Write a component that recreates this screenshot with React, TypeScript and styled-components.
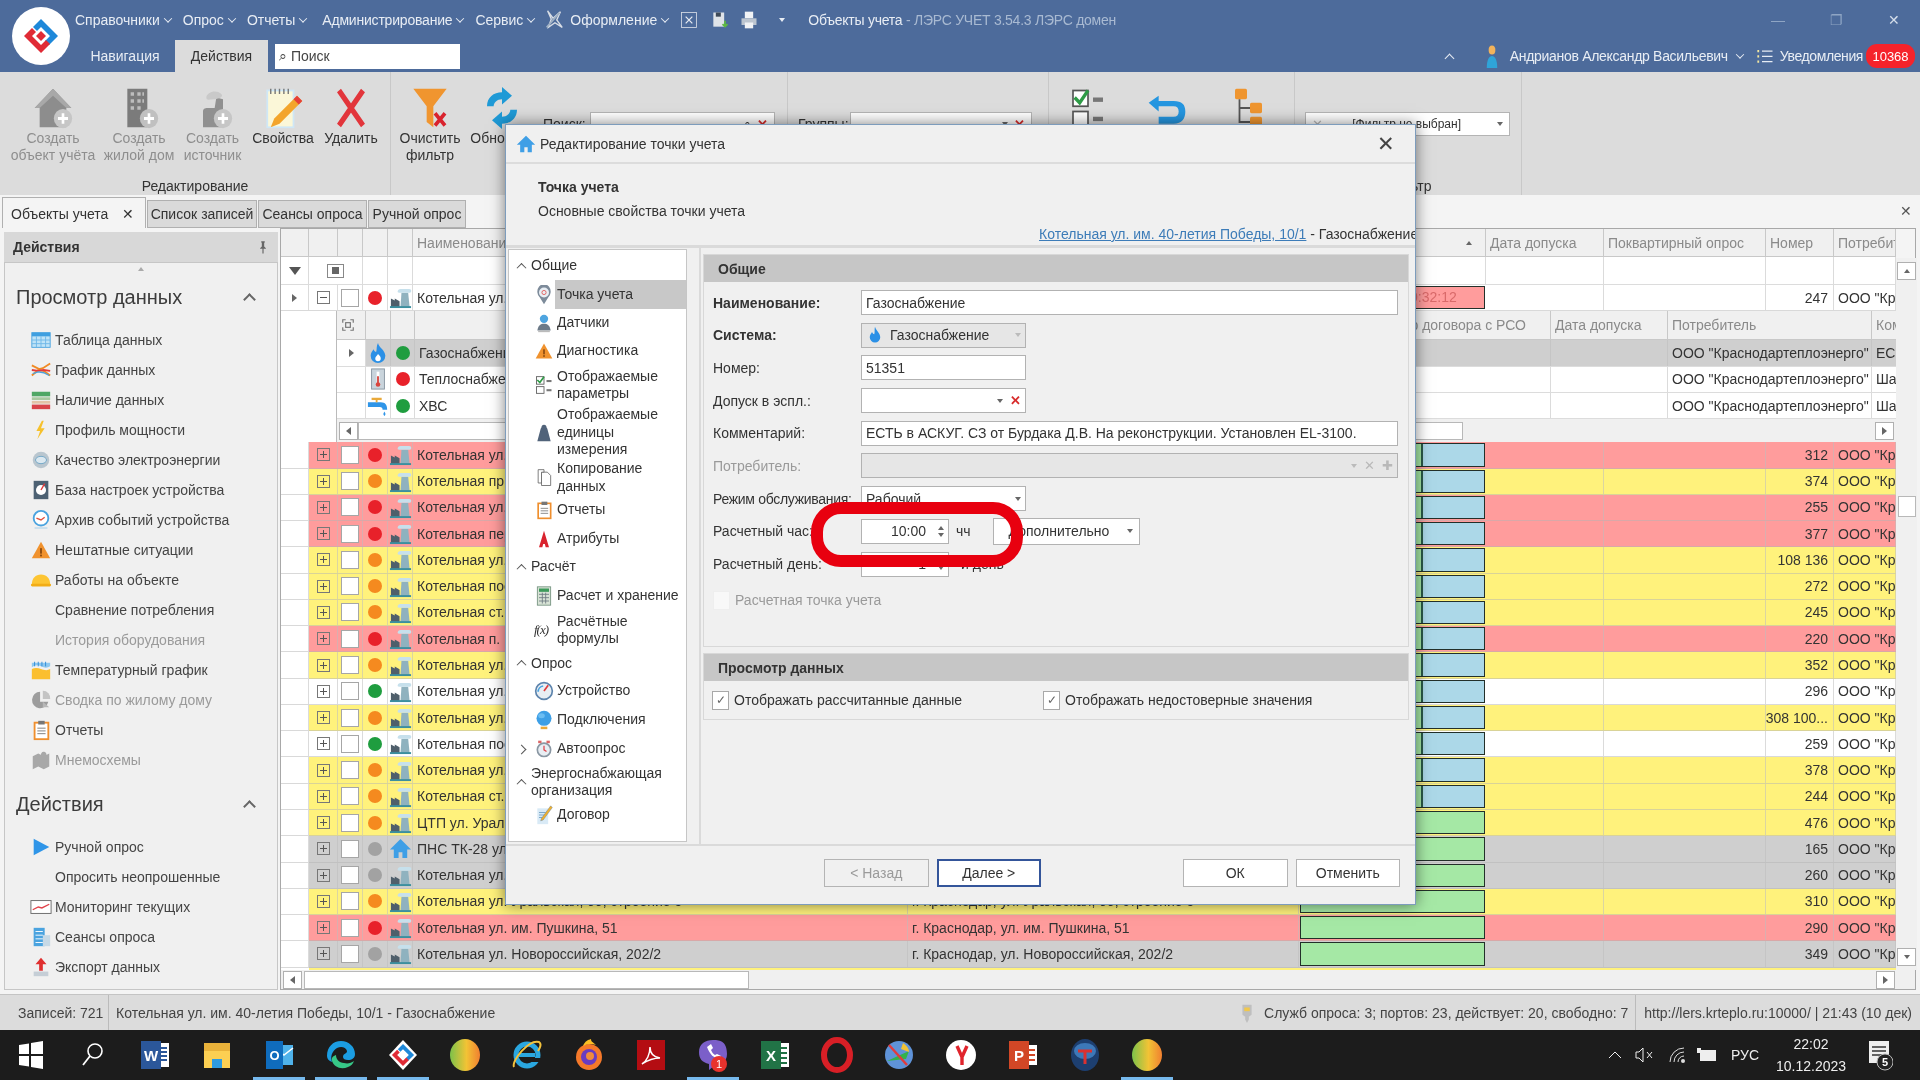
import React from "react";
import styled, { createGlobalStyle } from "styled-components";

const Global = createGlobalStyle`
  html, body { margin: 0; padding: 0; background: #1c1c1c; }
  body { font-family: "Liberation Sans", Arial, sans-serif; }
  * { box-sizing: border-box; }
`;

const paths: Record<string, React.ReactNode> = {
  table: <><rect x="2" y="4" width="20" height="16" fill="#bfe3f7" stroke="#4aa3df"/><rect x="2" y="4" width="20" height="4" fill="#3f9fe0"/><path d="M2 12h20M2 16h20M7 8v12M12 8v12M17 8v12" stroke="#6db7e8"/></>,
  chart: <><path d="M2 7l8 4 4-1 8-5M2 18l7-6 6 1 7 5" fill="none" stroke="#f08a24" strokeWidth="2"/><path d="M2 12l7 1 6-1 7 1" stroke="#e33b3b" strokeWidth="2" fill="none"/><path d="M3 16l6-2 6 1 6 3" stroke="#4aa3df" strokeWidth="1.5" fill="none"/></>,
  bars: <><rect x="2" y="3" width="20" height="5" fill="#4fa765"/><rect x="2" y="9" width="20" height="3" fill="#a8c9a0"/><rect x="2" y="13" width="20" height="3" fill="#e3c2a8"/><rect x="2" y="17" width="20" height="5" fill="#d8434a"/></>,
  bolt: <path d="M13 2L7 13h4l-3 9 8-12h-4l3-8z" fill="#f6c12c"/>,
  quality: <><circle cx="12" cy="12" r="9" fill="#b9c6cf"/><ellipse cx="12" cy="12" rx="6" ry="4" fill="#dbe8f0" stroke="#6fa5c6"/></>,
  base: <><rect x="4" y="2" width="16" height="20" fill="#4d6173"/><circle cx="12" cy="12" r="5.5" fill="#fff"/><path d="M12 12l4-7" stroke="#e33b3b" strokeWidth="1.5"/></>,
  events: <><circle cx="12" cy="10" r="8" fill="#fff" stroke="#4aa3df" strokeWidth="2"/><path d="M7 10l5 2 4-3" stroke="#e24f3b" fill="none" strokeWidth="1.5"/><rect x="5" y="20" width="14" height="1.5" fill="#bcd9ec"/></>,
  warn: <><path d="M12 3l10 18H2z" fill="#f0922e"/><rect x="11" y="10" width="2" height="6" fill="#8a4a10"/><rect x="11" y="17" width="2" height="2" fill="#8a4a10"/></>,
  hardhat: <><path d="M2 17c0-7 4-11 10-11s10 4 10 11z" fill="#fdc533"/><rect x="1" y="16" width="22" height="3" rx="1.5" fill="#f2ad16"/></>,
  temp: <><path d="M2 4h20v4c-3 2-6 2-10 0S5 7 2 9z" fill="#8ec8ef"/><path d="M2 11c4-2 7-1 10 0s7 2 10 0v11H2z" fill="#fbbf2f"/><path d="M5 3v5M9 3v5M13 3v5M17 3v5" stroke="#2e8bd6"/></>,
  pie: <><path d="M11 3a9 9 0 1 0 9 11h-9z" fill="#9d9d9d"/><path d="M14 2a8 8 0 0 1 8 9h-8z" fill="#c4c4c4"/><path d="M14 14l7 6h-7z" fill="#b8b8b8"/></>,
  report: <><rect x="5" y="4" width="15" height="18" fill="#fff" stroke="#ef8f2e" strokeWidth="2"/><rect x="9" y="2" width="7" height="4" fill="#777"/><path d="M8 10h9M8 13h9M8 16h9" stroke="#777"/></>,
  mnemo: <path d="M3 8l6-3 6 3 6-3v14l-6 3-6-3-6 3zM15 3a3 3 0 1 1-.1 0z" fill="#a8a8a8"/>,
  play: <path d="M4 3l17 9-17 9z" fill="#2f95e8"/>,
  monitor: <><rect x="1" y="5" width="22" height="14" fill="#fff" stroke="#666"/><path d="M3 15l6-3 4 1 8-4" stroke="#e0424a" fill="none" strokeWidth="1.5"/></>,
  sessions: <><rect x="4" y="2" width="12" height="20" fill="#4aa3df"/><rect x="14" y="10" width="8" height="12" fill="#c6d9e6"/><path d="M6 6h8M6 10h8M6 14h8M6 18h8" stroke="#fff"/></>,
  exportI: <><path d="M12 2l6 7h-4v7h-4V9H6z" fill="#df2f2f"/><rect x="4" y="17" width="16" height="5" fill="#c5ced6"/></>,
  point: <><path d="M12 23l-5-8a8 9 0 1 1 10 0z" fill="#7d8b9a"/><circle cx="12" cy="9" r="6" fill="#e8eef4"/><circle cx="12" cy="9" r="2.5" fill="none" stroke="#e0534f"/></>,
  sensor: <><circle cx="12" cy="7" r="5" fill="#4ea5e0"/><path d="M4 21c1-6 4-8 8-8s7 2 8 8z" fill="#6c7a88"/><rect x="5" y="21" width="14" height="2" fill="#bbb"/></>,
  params: <><rect x="3" y="2" width="9" height="9" fill="#fff" stroke="#555"/><path d="M4 6l3 3 5-7" stroke="#2e9b46" strokeWidth="2" fill="none"/><rect x="3" y="14" width="9" height="8" fill="#fff" stroke="#555"/><rect x="15" y="6" width="6" height="2.5" fill="#777"/><rect x="15" y="17" width="6" height="2.5" fill="#777"/></>,
  unit: <path d="M9 5a3 3 0 1 1 6 0l1 2 4 15H4L8 7z" fill="#51637a"/>,
  copy: <><path d="M9 5h7l4 4v12H9z" fill="#fff" stroke="#666"/><path d="M5 2h7v3H9v13H5z" fill="#fff" stroke="#666"/></>,
  attr: <path d="M12 2l6 20h-4l-1-4h-2l-1 4H6z" fill="#d9232e"/>,
  calc: <><rect x="4" y="1" width="16" height="22" fill="#d7e2d5" stroke="#6f8f7b"/><rect x="6" y="3" width="12" height="4" fill="#3d9a5a"/><path d="M6 10h12M6 14h12M6 18h12M10 8v13M14 8v13" stroke="#6b7780"/></>,
  device: <><circle cx="12" cy="12" r="10" fill="#e8eef3" stroke="#5d84ad" strokeWidth="2"/><path d="M12 12l5-7" stroke="#e03b3b" strokeWidth="2"/><path d="M5 13a7 7 0 0 1 6-7" stroke="#4aa3df" strokeWidth="2" fill="none"/></>,
  globe: <><circle cx="12" cy="10" r="9" fill="#3d9fe6"/><ellipse cx="9" cy="7" rx="4" ry="3" fill="#6bbdf2"/><rect x="8" y="20" width="8" height="3" fill="#e9a93a"/></>,
  alarm: <><circle cx="12" cy="13" r="8" fill="#e8eef3" stroke="#8a97a3" strokeWidth="2"/><path d="M12 8v5l3 2" stroke="#e0424a" strokeWidth="1.5" fill="none"/><rect x="5" y="2" width="4" height="3" fill="#d66"/><rect x="15" y="2" width="4" height="3" fill="#d66"/></>,
  contract: <><rect x="4" y="4" width="13" height="19" fill="#d9eaf6"/><path d="M6 9h8M6 12h8M6 15h6" stroke="#6a9bc0"/><path d="M20 1l2 2-11 15-3 1 1-3z" fill="#f0b02e" stroke="#5a7d9e" strokeWidth=".5"/></>,
  house: <path d="M12 2L1 13h4v9h5v-6h4v6h5v-9h4z" fill="#3f9fe6"/>,
  flame: <path d="M12 1c1 5 7 8 7 14a7 7 0 0 1-14 0c0-3 2-5 3-7 1 2 2 3 3 3 1-3 0-7 1-10z" fill="#2b90e6"/>,
  flameW: <><path d="M12 1c1 5 8 8 8 14a8 8 0 0 1-16 0c0-3 2-5 3-7 1 2 2 3 3 3 1-3 0-7 2-10z" fill="#2b90e6"/><path d="M12 13c2 2 3 3 3 5a3 3 0 0 1-6 0c0-2 2-3 3-5z" fill="#fff"/></>,
  thermo: <><rect x="5" y="1" width="14" height="22" fill="#c9d4dc" stroke="#8795a0"/><rect x="10.5" y="4" width="3" height="13" fill="#fff"/><rect x="11" y="9" width="2" height="9" fill="#d8453e"/><circle cx="12" cy="18" r="2.5" fill="#d8453e"/></>,
  tap: <><path d="M1 8h14c5 0 7 3 7 8h-5c0-2-1-3-3-3H1z" fill="#2f95e8"/><rect x="5" y="3" width="11" height="2.5" fill="#e9a93a"/><rect x="9.5" y="4" width="2" height="4" fill="#e9a93a"/><path d="M19 18c1 2 2 3 0 5-2-2-1-3 0-5z" fill="#2f95e8"/></>,
  boiler: <><path d="M13 7h7l1.5 15H12z" fill="#8fb2bf"/><path d="M2 13l4 2v-2l5 3v6H2z" fill="#4f5f6b"/><path d="M9 6c0-3 3-3 4-3h8c3 0 3 4 0 4H12c-2 0-3 0-3-1z" fill="#c6e0ec"/><rect x="1" y="21" width="22" height="2" fill="#3c8f9f"/></>,
  houseAdd: <><path d="M12 1L1 12h3v11h16V12h3z" fill="#8d8d8d"/><path d="M12 1L1 12h3L12 5l8 7h3z" fill="#a8a8a8"/><circle cx="18" cy="18" r="5.5" fill="#c6c6c6"/><path d="M18 15v6M15 18h6" stroke="#fff" strokeWidth="1.6"/></>,
  buildAdd: <><rect x="5" y="1" width="12" height="22" fill="#7b7b7b"/><path d="M7 4h2M11 4h2M14 4h1M7 8h2M11 8h2M14 8h1M7 12h2M11 12h2" stroke="#bdbdbd" strokeWidth="2"/><circle cx="18" cy="18" r="5.5" fill="#c0c0c0"/><path d="M18 15v6M15 18h6" stroke="#fff" strokeWidth="1.6"/></>,
  srcAdd: <><path d="M6 23V14c0-2 2-2 3-2h4l1-6 4 1v16z" fill="#909090"/><path d="M8 6c0-3 6-5 9-2 2 2-3 3-5 3s-4 1-4-1z" fill="#c9c9c9"/><circle cx="18" cy="18" r="5.5" fill="#c6c6c6"/><path d="M18 15v6M15 18h6" stroke="#fff" strokeWidth="1.6"/></>,
  props: <><rect x="3" y="2" width="15" height="21" fill="#fbf7d8" stroke="#cfe7f6"/><path d="M5 1v3M7.5 1v3M10 1v3M12.5 1v3M15 1v3" stroke="#777" strokeWidth=".8"/><path d="M20 5l3 3-13 13-5 2 2-5z" fill="#f3a52c"/><path d="M20 5l3 3-2 2-3-3z" fill="#e5403a"/></>,
  del: <path d="M4 2L20 22M20 2L4 22" stroke="#e2353b" strokeWidth="3.4"/>,
  funnel: <><path d="M2 1h20L14 11v12l-4-3v-9z" fill="#f0952f"/><path d="M15 15l6 7M21 15l-6 7" stroke="#d9232e" strokeWidth="2.2"/></>,
  refresh: <><path d="M3 11c0-5 4-8 9-8V0l6 5-6 5V7c-3 0-5 2-5 4z" fill="#1f9ad6"/><path d="M21 13c0 5-4 8-9 8v3l-6-5 6-5v3c3 0 5-2 5-4z" fill="#1f9ad6"/></>,
  undo: <><path d="M7 5L1 9l6 5v-3h9c2 0 3 1 3 3s-1 3-3 3H7v4h9c5 0 7-3 7-7s-2-6-7-6H7z" fill="#2596e0"/></>,
  tree: <><rect x="2" y="1" width="8" height="6" rx="1" fill="#ef952f"/><rect x="12" y="9" width="8" height="6" rx="1" fill="#ef952f"/><rect x="12" y="17" width="8" height="6" rx="1" fill="#ef952f"/><path d="M5 7v13h7M5 12h7" stroke="#555" strokeWidth="1.2" fill="none"/></>,
  palette: <><path d="M5 2l6 8 8-7-4 9 6 8-8-5-7 5 3-9z" fill="none" stroke="#d9dee6" strokeWidth="1.5"/><path d="M4 20L18 4" stroke="#9fb0c4" strokeWidth="2"/></>,
  xls: <><rect x="3" y="3" width="18" height="18" fill="none" stroke="#d9dee6"/><path d="M8 8l8 8M16 8l-8 8" stroke="#e8ecf2" strokeWidth="1.5"/></>,
  focus: <><path d="M3 8V3h5M16 3h5v5M21 16v5h-5M8 21H3v-5" fill="none" stroke="#777" strokeWidth="2"/><rect x="8" y="8" width="8" height="8" fill="none" stroke="#777" strokeWidth="2"/></>,
  saveIco: <><rect x="4" y="3" width="13" height="17" fill="#dfe3e8"/><rect x="7" y="3" width="6" height="5" fill="#3e4a58"/><path d="M18 13v6M15 17l3 3 3-3" stroke="#5dbb3f" strokeWidth="2" fill="none"/></>,
  printIco: <><rect x="7" y="2" width="10" height="8" fill="#f1f3f6"/><rect x="3" y="10" width="18" height="8" fill="#bcc5d0"/><rect x="7" y="15" width="10" height="7" fill="#f1f3f6"/></>,
  user: <><circle cx="12" cy="6" r="4.5" fill="#f2b35b"/><path d="M5 24c0-8 3-12 7-12s7 4 7 12z" fill="#2fa4d9"/></>,
  listI: <><path d="M3 4v3M3 11v3M3 18v3" stroke="#f4e7a0" strokeWidth="2.4"/><path d="M8 5.5h14M8 12.5h14M8 19.5h14" stroke="#e6ecf4" strokeWidth="1.8"/></>,
  pin: <path d="M9 2h6v2l-1 1v6l3 3v1h-4v8h-2v-8H7v-1l3-3V5L9 4z" fill="#666"/>,
  lamp: <><path d="M7 3h10v11l-3 2v3l-2 4-2-4v-3l-3-2z" fill="#bfbfbf"/><rect x="9" y="6" width="6" height="4" fill="#f2c84b"/></>,
};

const Svg = ({ n, s = 24, h }: { n: string; s?: number; h?: number }) => (
  <svg width={s} height={h ?? s} viewBox="0 0 24 24" preserveAspectRatio="none" style={{ flex: "none", display: "block" }}>{paths[n]}</svg>
);

const LersLogo = ({ s }: { s: number }) => (
  <svg width={s} height={s} viewBox="0 0 40 40">
    <path d="M20 3L37 20l-9 9-4-4 5-5-9-9-4 4-4-4z" fill="#1e88d9" />
    <path d="M3 20l8-8 4 4-4 4 9 9 5-5 4 4-9 9z" fill="#e02b36" />
    <path d="M20 15l5 5-5 5-5-5z" fill="#e02b36" />
  </svg>
);

/* ---------- page ---------- */
const Screen = styled.div`
  position: relative;
  width: 1920px;
  height: 1080px;
  overflow: hidden;
  display: flex;
  flex-direction: column;
  background: #f4f4f4;
  color: #333;
  font-size: 14px;
  filter: blur(0.5px);
`;

/* ---------- title ---------- */
const TitleBar = styled.header`
  height: 72px;
  flex: none;
  display: flex;
  background: #4d6b9b;
  color: #e8edf4;
`;
const LogoBox = styled.div`
  width: 75px;
  flex: none;
  display: flex;
  align-items: center;
  padding-left: 12px;
`;
const LogoCircle = styled.div`
  width: 58px;
  height: 58px;
  border-radius: 50%;
  background: #fff;
  display: flex;
  align-items: center;
  justify-content: center;
`;
const TitleRows = styled.div`
  flex: 1;
  display: flex;
  flex-direction: column;
`;
const MenuRow = styled.div`
  height: 40px;
  display: flex;
  align-items: center;
`;
const MenuItem = styled.div<{ $mr?: number; $ls?: number }>`
  display: flex;
  align-items: center;
  gap: 5px;
  margin-right: ${(p) => p.$mr ?? 12}px;
  letter-spacing: ${(p) => p.$ls ?? 0}px;
  white-space: nowrap;
`;
const Chev = styled.i`
  display: block;
  width: 6px;
  height: 6px;
  border-right: 1.5px solid #e8edf4;
  border-bottom: 1.5px solid #e8edf4;
  transform: rotate(45deg) translate(-1px, -1px);
`;
const Caret = styled.i`
  display: block;
  width: 0;
  height: 0;
  border-left: 3.5px solid transparent;
  border-right: 3.5px solid transparent;
  border-top: 4px solid #e8edf4;
`;
const TitleText = styled.div`
  margin-left: 23px;
  white-space: nowrap;
  letter-spacing: -0.25px;
  & > span { color: #a9bad2; }
`;
const WinButtons = styled.div`
  margin-left: auto;
  display: flex;
  align-items: center;
  gap: 45px;
  padding-right: 20px;
  color: #8fa5c4;
  & > span:last-child { color: #d5deea; }
`;
const TabsRow = styled.div`
  height: 32px;
  display: flex;
  align-items: stretch;
`;
const TopTab = styled.div<{ $active?: boolean; $w: number }>`
  width: ${(p) => p.$w}px;
  display: flex;
  align-items: center;
  justify-content: center;
  background: ${(p) => (p.$active ? "#dcdcdc" : "transparent")};
  color: ${(p) => (p.$active ? "#333" : "#e8edf4")};
`;
const TopSearch = styled.div`
  width: 185px;
  height: 25px;
  margin: 4px 0 0 7px;
  background: #fff;
  color: #444;
  display: flex;
  align-items: center;
  padding-left: 4px;
  gap: 2px;
`;
const RightInfo = styled.div`
  margin-left: auto;
  display: flex;
  align-items: center;
  white-space: nowrap;
  padding-right: 5px;
`;
const UserName = styled.span`
  letter-spacing: -0.3px;
  margin-right: 4px;
`;
const NoticeLabel = styled.span`
  letter-spacing: -0.4px;
  margin-left: 6px;
`;
const Badge = styled.div`
  width: 49px;
  height: 24px;
  margin-left: 3px;
  border-radius: 11px;
  background: #f5232b;
  color: #fff;
  display: flex;
  align-items: center;
  justify-content: center;
  font-size: 13px;
`;
const ChevUp = styled.i`
  display: block;
  width: 7px;
  height: 7px;
  margin: 4px 30px 0 0;
  border-left: 1.5px solid #e8edf4;
  border-top: 1.5px solid #e8edf4;
  transform: rotate(45deg);
`;

/* ---------- ribbon ---------- */
const Ribbon = styled.section`
  height: 123px;
  flex: none;
  display: flex;
  background: #dcdcdc;
`;
const RGroup = styled.div<{ $w: number; $nob?: boolean }>`
  width: ${(p) => p.$w}px;
  flex: none;
  display: flex;
  flex-direction: column;
  border-right: ${(p) => (p.$nob ? "none" : "1px solid #c8c8c8")};
`;
const RBody = styled.div`
  flex: 1;
  display: flex;
  align-items: flex-start;
  padding-top: 15px;
`;
const RLabel = styled.div`
  height: 18px;
  text-align: center;
  line-height: 18px;
  white-space: nowrap;
`;
const RButton = styled.div<{ $w: number; $off?: boolean }>`
  width: ${(p) => p.$w}px;
  flex: none;
  display: flex;
  flex-direction: column;
  align-items: center;
  text-align: center;
  line-height: 17px;
  color: ${(p) => (p.$off ? "#8e8e8e" : "#333")};
  white-space: pre-line;
  & > svg { margin-bottom: 1px; }
`;
const RSpacer = styled.div<{ $w: number }>`
  width: ${(p) => p.$w}px;
  flex: none;
`;
const RField = styled.div<{ $w: number }>`
  width: ${(p) => p.$w}px;
  height: 24px;
  margin-top: 25px;
  background: #fff;
  border: 1px solid #b4b4b4;
  color: #333;
  display: flex;
  align-items: center;
  justify-content: flex-end;
  padding: 0 6px;
  gap: 6px;
  font-size: 12px;
  flex: none;
`;
const RFieldLabel = styled.div<{ $w: number }>`
  width: ${(p) => p.$w}px;
  margin-top: 29px;
  flex: none;
`;
const Arrow = styled.i<{ $up?: boolean; $c?: string }>`
  display: block;
  width: 0;
  height: 0;
  flex: none;
  border-left: 3.5px solid transparent;
  border-right: 3.5px solid transparent;
  ${(p) => (p.$up ? `border-bottom: 4px solid ${p.$c ?? "#666"};` : `border-top: 4px solid ${p.$c ?? "#666"};`)}
`;

/* ---------- doc tabs ---------- */
const DocTabs = styled.nav`
  height: 33px;
  flex: none;
  display: flex;
  align-items: flex-end;
  padding-left: 2px;
  gap: 1px;
  background: #f4f4f4;
  position: relative;
`;
const DocTab = styled.div<{ $w: number; $active?: boolean }>`
  width: ${(p) => p.$w}px;
  height: ${(p) => (p.$active ? 31 : 28)}px;
  display: flex;
  align-items: center;
  justify-content: ${(p) => (p.$active ? "space-between" : "center")};
  padding: ${(p) => (p.$active ? "2px 11px 0 8px" : "0")};
  background: ${(p) => (p.$active ? "#f4f4f4" : "#dadada")};
  border: 1px solid #b0b0b0;
  border-bottom: ${(p) => (p.$active ? "none" : "1px solid #b0b0b0")};
  white-space: nowrap;
`;
const DocClose = styled.div`
  position: absolute;
  right: 8px;
  top: 8px;
  color: #555;
  font-size: 14px;
`;

/* ---------- main ---------- */
const Main = styled.main`
  height: 766px;
  flex: none;
  display: flex;
  padding: 0 4px 4px 4px;
  gap: 2px;
  background: #f4f4f4;
`;
const SidePanel = styled.aside`
  width: 274px;
  flex: none;
  display: flex;
  flex-direction: column;
  padding-top: 4px;
`;
const SideHead = styled.div`
  height: 30px;
  flex: none;
  background: #d8d8d8;
  display: flex;
  align-items: center;
  justify-content: space-between;
  padding: 0 8px 0 9px;
  font-weight: bold;
`;
const SideBody = styled.div`
  flex: 1;
  border: 1px solid #c6c6c6;
  background: #f0f0f0;
  overflow: hidden;
  display: flex;
  flex-direction: column;
`;
const SideArrow = styled.div<{ $h: number }>`
  height: ${(p) => p.$h}px;
  flex: none;
  display: flex;
  justify-content: center;
  align-items: center;
`;
const SideTitle = styled.div`
  height: 44px;
  flex: none;
  display: flex;
  align-items: center;
  justify-content: space-between;
  padding: 0 23px 0 11px;
  font-size: 20px;
  color: #3c3c3c;
`;
const ChevTitle = styled.i`
  display: block;
  width: 9px;
  height: 9px;
  margin-top: 5px;
  border-left: 2px solid #666;
  border-top: 2px solid #666;
  transform: rotate(45deg);
`;
const SideList = styled.div`
  margin: 6px 0 7px;
  display: flex;
  flex-direction: column;
`;
const SideItem = styled.div<{ $off?: boolean }>`
  height: 30px;
  display: flex;
  align-items: center;
  padding-left: 25px;
  gap: 3px;
  color: ${(p) => (p.$off ? "#9a9a9a" : "#444")};
  white-space: nowrap;
`;
const IconSlot = styled.div`
  width: 22px;
  height: 22px;
  flex: none;
`;

/* ---------- grid ---------- */
const GridBox = styled.div`
  flex: 1;
  display: flex;
  flex-direction: column;
  border: 1px solid #a8a8a8;
  min-width: 0;
`;
const GridTop = styled.div`
  height: 741px;
  flex: none;
  display: flex;
`;
const GridMain = styled.div`
  width: 1615px;
  flex: none;
  overflow: hidden;
`;
const cols = "28px 29px 25px 25px 25px 495px 391px 187px 118px 162px 68px 62px";
const HeadRow = styled.div`
  display: grid;
  grid-template-columns: ${cols};
  height: 28px;
  background: #f0f0f0;
  border-bottom: 1px solid #c8c8c8;
`;
const HeadCell = styled.div<{ $end?: boolean; $pad?: number }>`
  display: flex;
  align-items: center;
  justify-content: ${(p) => (p.$end ? "flex-end" : "flex-start")};
  padding: 0 ${(p) => p.$pad ?? 4}px;
  border-right: 1px solid #c8c8c8;
  color: #8a8a8a;
  white-space: nowrap;
  overflow: hidden;
`;
const FilterRow = styled.div`
  display: grid;
  grid-template-columns: ${cols};
  height: 28px;
  background: #fff;
  border-bottom: 1px solid #dcdcdc;
`;
const BaseCell = styled.div<{ $span?: number; $white?: boolean }>`
  display: flex;
  align-items: center;
  justify-content: center;
  border-right: 1px solid rgba(190, 190, 190, 0.55);
  overflow: hidden;
  white-space: nowrap;
  ${(p) => (p.$span ? `grid-column: span ${p.$span};` : "")}
  ${(p) => (p.$white ? "background: #fff;" : "")}
`;
const FilterMark = styled.div`
  width: 17px;
  height: 14px;
  border: 1px solid #888;
  display: flex;
  align-items: center;
  justify-content: center;
  &::after { content: ""; width: 7px; height: 7px; background: #666; }
`;
const Funnel = styled.div`
  width: 0;
  height: 0;
  border-left: 6px solid transparent;
  border-right: 6px solid transparent;
  border-top: 8px solid #555;
`;
const RowLine = styled.div<{ $bg?: string; $h?: number }>`
  display: grid;
  grid-template-columns: ${cols};
  height: ${(p) => p.$h ?? 26.28}px;
  background: ${(p) => `linear-gradient(90deg, #fff 28px, ${p.$bg ?? "#fff"} 28px)`};
  border-bottom: 1px solid rgba(180, 180, 180, 0.5);
`;
const TextCell = styled(BaseCell)<{ $num?: boolean }>`
  justify-content: ${(p) => (p.$num ? "flex-end" : "flex-start")};
  padding: 0 ${(p) => (p.$num ? "5px" : "4px")};
  color: #333;
`;
const Expander = styled.div`
  width: 13px;
  height: 13px;
  border: 1px solid #777;
  position: relative;
  &::before { content: ""; position: absolute; left: 2px; right: 2px; top: 5px; height: 1px; background: #555; }
`;
const ExpanderPlus = styled(Expander)`
  &::after { content: ""; position: absolute; top: 2px; bottom: 2px; left: 5px; width: 1px; background: #555; }
`;
const CheckBox = styled.div`
  width: 18px;
  height: 18px;
  background: #fff;
  border: 1px solid #a6a6a6;
`;
const Dot = styled.div<{ $c: string }>`
  width: 14px;
  height: 14px;
  border-radius: 50%;
  background: ${(p) => p.$c};
`;
const TriRight = styled.div`
  width: 0;
  height: 0;
  border-top: 4px solid transparent;
  border-bottom: 4px solid transparent;
  border-left: 5px solid #666;
`;
const ProgressCell = styled.div<{ $blue?: boolean; $bg?: string }>`
  margin: 1px 1px;
  border: 1.5px solid #23302a;
  display: flex;
  align-items: stretch;
  overflow: hidden;
  background: ${(p) => p.$bg ?? "#a5e8a5"};
  color: #d96a6a;
  justify-content: center;
  line-height: 20px;
  &::after {
    content: "";
    display: ${(p) => (p.$blue ? "block" : "none")};
    width: 61px;
    margin-left: auto;
    background: #acd8e8;
    border-left: 2px solid #2a5a48;
  }
`;
const SubPanel = styled.div`
  height: 131px;
  padding-left: 55px;
  background: #fff;
`;
const subCols = "29px 25px 24px 1136px 117px 204px 25px";
const SubInner = styled.div`
  border-left: 1px solid #bbb;
  height: 131px;
  display: flex;
  flex-direction: column;
`;
const SubHead = styled.div`
  display: grid;
  grid-template-columns: ${subCols};
  height: 29px;
  flex: none;
  background: #f0f0f0;
  border-bottom: 1px solid #c8c8c8;
`;
const SubRow = styled.div<{ $bg?: string }>`
  display: grid;
  grid-template-columns: ${subCols};
  height: 26.4px;
  flex: none;
  background: ${(p) => p.$bg ?? "#fff"};
  border-bottom: 1px solid #dcdcdc;
`;
const SubScroll = styled.div`
  flex: 1;
  background: #f0f0f0;
  display: flex;
  align-items: center;
  padding: 0 2px;
`;
const ScrollBtn = styled.div`
  width: 19px;
  height: 18px;
  flex: none;
  background: #fff;
  border: 1px solid #b0b0b0;
  display: flex;
  align-items: center;
  justify-content: center;
`;
const ScrollThumb = styled.div<{ $w: number }>`
  width: ${(p) => p.$w}px;
  height: 18px;
  flex: none;
  background: #fff;
  border: 1px solid #b8b8b8;
`;
const TriLeft = styled.div`
  width: 0;
  height: 0;
  border-top: 4px solid transparent;
  border-bottom: 4px solid transparent;
  border-right: 5px solid #666;
`;
const VScroll = styled.div`
  flex: 1;
  margin-top: 29px;
  padding: 4px 1px;
  background: #f0f0f0;
  display: flex;
  flex-direction: column;
  align-items: center;
`;
const VThumb = styled.div`
  width: 18px;
  height: 21px;
  margin: 216px 0 auto;
  background: #fff;
  border: 1px solid #b8b8b8;
`;
const HScroll = styled.div`
  flex: 1;
  background: #f0f0f0;
  display: flex;
  align-items: center;
  padding: 0 20px 0 2px;
  gap: 2px;
`;
const Push = styled.div`
  margin-left: auto;
`;

/* ---------- status and taskbar ---------- */
const StatusBar = styled.footer`
  height: 36px;
  flex: none;
  background: #dcdcdc;
  display: flex;
  align-items: center;
  border-top: 1px solid #c4c4c4;
  white-space: nowrap;
  color: #444;
  font-size: 14px;
`;
const StatusCell = styled.div<{ $w?: number; $kind?: "first" | "plain" | "last" }>`
  height: 100%;
  display: flex;
  align-items: center;
  gap: 6px;
  padding: ${(p) => (p.$kind === "first" ? "0 0 0 18px" : p.$kind === "last" ? "0 8px" : "0 7px")};
  width: ${(p) => (p.$w ? `${p.$w}px` : "auto")};
  border-right: ${(p) => (p.$kind === "first" ? "1px solid #bbb" : "none")};
  border-left: ${(p) => (p.$kind === "last" ? "1px solid #bbb" : "none")};
`;
const Taskbar = styled.div`
  height: 50px;
  flex: none;
  background: #1c1c1c;
  display: flex;
  align-items: stretch;
  color: #eee;
`;
const TaskIcon = styled.div<{ $active?: boolean }>`
  width: 62px;
  flex: none;
  display: flex;
  align-items: center;
  justify-content: center;
  position: relative;
  &::after {
    content: "";
    display: ${(p) => (p.$active ? "block" : "none")};
    position: absolute;
    left: 5px;
    right: 5px;
    bottom: 0;
    height: 3px;
    background: #76b9ed;
  }
`;
const Tray = styled.div`
  margin-left: auto;
  display: flex;
  align-items: center;
  padding-right: 27px;
  font-size: 14px;
`;
const Clock = styled.div`
  width: 84px;
  margin: 0 14px 0 10px;
  text-align: center;
  line-height: 22px;
  font-size: 14px;
`;
const TrayItem = styled.div<{ $mr: number }>`
  margin-right: ${(p) => p.$mr}px;
  display: flex;
  align-items: center;
`;

/* ---------- modal ---------- */
const Modal = styled.div`
  position: absolute;
  left: 505px;
  top: 124px;
  width: 911px;
  height: 781px;
  display: flex;
  flex-direction: column;
  background: #f0f0f0;
  border: 1px solid #7d9cbc;
  box-shadow: 0 0 14px rgba(0, 0, 0, 0.5);
  color: #333;
`;
const MTitle = styled.div`
  height: 39px;
  flex: none;
  display: flex;
  align-items: center;
  gap: 4px;
  padding: 0 20px 0 10px;
  border-bottom: 2px solid #dcdcdc;
`;
const MClose = styled.div`
  margin-left: auto;
  font-size: 21px;
  color: #444;
`;
const MHead = styled.div`
  height: 84px;
  flex: none;
  position: relative;
  padding: 13px 0 0 32px;
  border-bottom: 3px solid #dadada;
`;
const MHeadTitle = styled.div`
  font-weight: bold;
  line-height: 20px;
`;
const MHeadSub = styled.div`
  margin-top: 5px;
  line-height: 18px;
`;
const MPath = styled.div`
  position: absolute;
  right: 0;
  bottom: 3px;
  white-space: nowrap;
  width: 376px;
  overflow: hidden;
  & > a { color: #3d7cb8; text-decoration: underline; }
`;
const MBody = styled.div`
  flex: 1;
  display: flex;
  min-height: 0;
  border-bottom: 2px solid #dadada;
`;
const NavTree = styled.div`
  width: 179px;
  margin: 1px 0 2px 2px;
  padding-top: 2px;
  flex: none;
  background: #fff;
  border: 1px solid #c6c6c6;
  display: flex;
  flex-direction: column;
  line-height: 17.5px;
`;
const NavGroup = styled.div<{ $h: number }>`
  height: ${(p) => p.$h}px;
  flex: none;
  display: flex;
  align-items: center;
  gap: 6px;
  padding-left: 9px;
`;
const NavGroupText = styled.span`
  white-space: pre-line;
`;
const NavChev = styled.i<{ $open?: boolean }>`
  display: block;
  width: 7px;
  height: 7px;
  flex: none;
  border-left: 1.5px solid #555;
  border-top: 1.5px solid #555;
  transform: ${(p) => (p.$open ? "rotate(45deg) translate(1px,1px)" : "rotate(135deg)")};
`;
const NavChevSlot = styled.div`
  width: 15px;
  flex: none;
`;
const NavItem = styled.div<{ $h: number; $sel?: boolean }>`
  height: ${(p) => p.$h}px;
  flex: none;
  display: flex;
  align-items: center;
  padding-left: 9px;
  gap: 1px;
  & > span {
    flex: 1;
    align-self: stretch;
    display: flex;
    align-items: center;
    white-space: pre-line;
    padding-left: 2px;
    background: ${(p) => (p.$sel ? "#c8c8c8" : "transparent")};
  }
`;
const FxLabel = styled.div`
  width: 20px;
  flex: none;
  font-family: "Liberation Serif", serif;
  font-style: italic;
  font-size: 13px;
  letter-spacing: -1px;
`;
const MContent = styled.div`
  flex: 1;
  border-left: 2px solid #dadada;
  margin-left: 12px;
  padding: 6px 6px 0 2px;
  display: flex;
  flex-direction: column;
  gap: 6px;
`;
const Group = styled.div`
  border: 1px solid #d8d8d8;
  display: flex;
  flex-direction: column;
`;
const GroupHead = styled.div`
  height: 27px;
  flex: none;
  background: #c6c6c6;
  display: flex;
  align-items: center;
  padding-left: 14px;
  font-weight: bold;
`;
const FormBody = styled.div`
  height: 364px;
  padding: 8px 10px 0 9px;
  position: relative;
`;
const FormRow = styled.div<{ $mt?: number }>`
  display: flex;
  align-items: center;
  height: 25px;
  margin-bottom: 7.7px;
  margin-top: ${(p) => p.$mt ?? 0}px;
  white-space: nowrap;
`;
const FLabel = styled.div<{ $bold?: boolean; $off?: boolean; $ls?: number }>`
  width: 148px;
  flex: none;
  font-weight: ${(p) => (p.$bold ? "bold" : "normal")};
  color: ${(p) => (p.$off ? "#9a9a9a" : "#333")};
  letter-spacing: ${(p) => p.$ls ?? 0}px;
  overflow: visible;
`;
const Input = styled.div<{ $w?: number; $off?: boolean; $right?: boolean }>`
  ${(p) => (p.$w ? `width:${p.$w}px; flex:none;` : "flex:1;")}
  height: 25px;
  background: ${(p) => (p.$off ? "#e6e6e6" : "#fff")};
  border: 1px solid #b2b2b2;
  display: flex;
  align-items: center;
  gap: 6px;
  padding: 0 4px;
  overflow: hidden;
  justify-content: ${(p) => (p.$right ? "flex-end" : "flex-start")};
`;
const InputEnd = styled.div<{ $mr?: number }>`
  margin-left: auto;
  margin-right: ${(p) => p.$mr ?? 0}px;
  display: flex;
  align-items: center;
  gap: 7px;
`;
const RedX = styled.span`
  color: #d82c2c;
  font-weight: bold;
  font-size: 13px;
`;
const GreyMark = styled.span`
  color: #b8b8b8;
  font-size: 13px;
`;
const SpinBox = styled.div`
  display: flex;
  flex-direction: column;
  gap: 3px;
  margin-left: 6px;
`;
const UnitLabel = styled.div<{ $ml: number }>`
  margin-left: ${(p) => p.$ml}px;
  flex: none;
`;
const DropButton = styled.div`
  width: 147px;
  height: 27px;
  margin-left: 22px;
  background: #fff;
  border: 1px solid #b2b2b2;
  display: flex;
  align-items: center;
  justify-content: space-between;
  padding: 0 6px 0 15px;
  flex: none;
`;
const CheckRow = styled.div<{ $inset?: number; $mt?: number }>`
  display: flex;
  align-items: center;
  height: 38px;
  padding-left: ${(p) => p.$inset ?? 8}px;
  margin-top: ${(p) => p.$mt ?? 0}px;
  gap: 5px;
  white-space: nowrap;
`;
const Check = styled.div<{ $on?: boolean; $off?: boolean; $ml?: number }>`
  width: 17px;
  height: 19px;
  flex: none;
  background: ${(p) => (p.$off ? "#f8f8f8" : "#fff")};
  border: 1px solid ${(p) => (p.$off ? "#eee" : "#a8a8a8")};
  margin-left: ${(p) => p.$ml ?? 0}px;
  color: #666;
  font-size: 12px;
  display: flex;
  align-items: center;
  justify-content: center;
`;
const OffText = styled.span`
  color: #9a9a9a;
`;
const MFoot = styled.div`
  height: 58px;
  flex: none;
  display: flex;
  align-items: center;
  padding: 0 15px 5px 318px;
  gap: 8px;
`;
const MButton = styled.div<{ $off?: boolean; $focus?: boolean; $gap?: number }>`
  width: 105px;
  height: 28px;
  display: flex;
  align-items: center;
  justify-content: center;
  background: ${(p) => (p.$off ? "#f0f0f0" : "#fff")};
  color: ${(p) => (p.$off ? "#9a9a9a" : "#333")};
  border: ${(p) => (p.$focus ? "2px solid #34559a" : "1px solid #b4b4b4")};
  margin-left: ${(p) => p.$gap ?? 0}px;
`;
const Highlight = styled.div`
  position: absolute;
  left: 811px;
  top: 502px;
  width: 212px;
  height: 65px;
  border: 12px solid #e8000f;
  border-radius: 30px;
`;

/* ---------- taskbar art ---------- */
const T = ({ children }: { children: React.ReactNode }) => (
  <svg width="36" height="36" viewBox="0 0 36 36">{children}</svg>
);
const taskArt: { a?: boolean; e: React.ReactNode }[] = [
  { e: <T><path d="M6 8l10-1.5V17H6zM18 6l12-2v13H18zM6 19h10v10.5L6 28zM18 19h12v13l-12-2z" fill="#fff" /></T> },
  { e: <T><circle cx="20" cy="14" r="7" fill="none" stroke="#fff" strokeWidth="1.6" /><path d="M15 19l-7 9" stroke="#fff" strokeWidth="1.8" /></T> },
  { e: <T><rect x="12" y="6" width="20" height="24" fill="#fff" /><path d="M20 11h10M20 15h10M20 19h10M20 23h10" stroke="#2b579a" strokeWidth="2" /><rect x="4" y="4" width="20" height="28" fill="#2b579a" /><text x="14" y="24" fill="#fff" fontSize="15" fontWeight="bold" textAnchor="middle" fontFamily="Liberation Sans">W</text></T> },
  { e: <T><path d="M5 6h12l3 3h11v22H5z" fill="#fccf52" /><rect x="5" y="6" width="26" height="8" fill="#e9b23a" /><rect x="13" y="22" width="10" height="9" fill="#2e9be0" /></T> },
  { a: true, e: <T><rect x="14" y="8" width="18" height="20" fill="#4fb2ea" /><path d="M14 11l9 7 9-7" stroke="#fff" fill="none" strokeWidth="1.5" /><rect x="5" y="4" width="17" height="28" fill="#0f6cbd" /><text x="13.5" y="23" fill="#fff" fontSize="13" fontWeight="bold" textAnchor="middle" fontFamily="Liberation Sans">O</text></T> },
  { a: true, e: <T><path d="M4 19C4 10 10 4 18 4c8 0 14 6 14 13 0 4-3 6-7 6-3 0-5-1-5-3 0-4 4-3 4-6-1-4-6-5-10-3-5 3-7 9-5 14-3-1-5-3-5-6z" fill="#1b9de2" /><path d="M9 24c2 6 9 9 16 6 3-1 5-3 6-6-3 2-6 3-10 2-5 0-8-4-8-8-3 1-5 3-4 6z" fill="#37c787" /></T> },
  { a: true, e: <T><path d="M18 3l14 15-14 15L4 18z" fill="#fff" /><g transform="translate(5 5) scale(.65)"><path d="M20 3L37 20l-9 9-4-4 5-5-9-9-4 4-4-4z" fill="#1e88d9" /><path d="M3 20l8-8 4 4-4 4 9 9 5-5 4 4-9 9z" fill="#e02b36" /></g></T> },
  { e: <T><defs><linearGradient id="gc1" x1="0" x2="1"><stop offset="0" stopColor="#7cc24a" /><stop offset=".55" stopColor="#f2c335" /><stop offset="1" stopColor="#f08030" /></linearGradient></defs><ellipse cx="18" cy="18" rx="15" ry="16" fill="url(#gc1)" /></T> },
  { e: <T><circle cx="18" cy="18" r="11" fill="none" stroke="#2aa7e0" strokeWidth="5" /><rect x="10" y="16" width="16" height="4" fill="#2aa7e0" /><rect x="20" y="21" width="12" height="4" fill="#1c1c1c" /><path d="M5 30C2 24 20 2 30 5c3 2 1 6-1 9" stroke="#f3c23c" strokeWidth="2" fill="none" /></T> },
  { e: <T><circle cx="18" cy="20" r="13" fill="#f5792a" /><path d="M12 9c2-5 5-6 8-7 0 3 2 3 5 6-6-2-9-1-13 1z" fill="#fbbf24" /><circle cx="18" cy="20" r="8" fill="#6a3cc0" /><circle cx="19" cy="19" r="4" fill="#f28b3c" /></T> },
  { e: <T><rect x="4" y="3" width="28" height="30" fill="#b40d12" /><path d="M9 27c5-3 8-10 8-17 0 6 3 10 10 11-7 0-12 2-18 6z" fill="none" stroke="#fff" strokeWidth="1.5" /></T> },
  { a: true, e: <T><path d="M18 3c8 0 14 2 14 14 0 8-6 11-12 11l-6 5v-6C7 25 4 22 4 15 4 7 10 3 18 3z" fill="#7b5fc9" /><path d="M12 10c3 8 7 11 12 12l2-3-4-2-2 1c-2-1-3-3-4-5l2-2-2-4z" fill="#fff" /><circle cx="24" cy="27" r="8" fill="#e8322d" /><text x="24" y="31" fill="#fff" fontSize="11" textAnchor="middle" fontFamily="Liberation Sans">1</text></T> },
  { e: <T><rect x="14" y="6" width="18" height="24" fill="#fff" /><path d="M22 11h8M22 16h8M22 21h8M22 26h8" stroke="#217346" strokeWidth="2" /><rect x="4" y="4" width="20" height="28" fill="#217346" /><text x="14" y="24" fill="#fff" fontSize="15" fontWeight="bold" textAnchor="middle" fontFamily="Liberation Sans">X</text></T> },
  { e: <T><ellipse cx="18" cy="18" rx="13" ry="15" fill="none" stroke="#d81f26" strokeWidth="6" /></T> },
  { e: <T><circle cx="18" cy="18" r="14" fill="#5f93d8" /><path d="M6 24l22-10-3 8z" fill="#33b24a" /><path d="M8 8l18 20" stroke="#e23b3b" strokeWidth="2.4" /><path d="M22 6c3 2 6 5 6 9l-8-3z" fill="#f2c335" /></T> },
  { e: <T><circle cx="18" cy="18" r="15" fill="#fff" /><path d="M14 9l5 11v8M24 9l-5 11" stroke="#e0242c" strokeWidth="3.4" fill="none" /></T> },
  { e: <T><rect x="16" y="8" width="16" height="20" fill="#fff" /><path d="M22 13h8M22 18h8M22 23h8" stroke="#d24726" strokeWidth="2" /><rect x="4" y="4" width="20" height="28" fill="#d24726" /><text x="14" y="24" fill="#fff" fontSize="15" fontWeight="bold" textAnchor="middle" fontFamily="Liberation Sans">P</text></T> },
  { e: <T><ellipse cx="18" cy="18" rx="14" ry="16" fill="#1d3f70" /><ellipse cx="18" cy="14" rx="11" ry="8" fill="#3d78b8" /><path d="M11 14h14M18 14v13" stroke="#d93131" strokeWidth="3" /></T> },
  { a: true, e: <T><defs><linearGradient id="gc2" x1="0" x2="1"><stop offset="0" stopColor="#7cc24a" /><stop offset=".55" stopColor="#f2c335" /><stop offset="1" stopColor="#f08030" /></linearGradient></defs><ellipse cx="18" cy="18" rx="15" ry="16" fill="url(#gc2)" /></T> },
];

/* ---------- data ---------- */
const menuTop: { t: string; mr?: number; ls?: number }[] = [
  { t: "Справочники" }, { t: "Опрос" }, { t: "Отчеты", mr: 16 }, { t: "Администрирование", ls: -0.2 }, { t: "Сервис", mr: 9 },
];
const viewItems: [string, string, boolean?][] = [
  ["table", "Таблица данных"], ["chart", "График данных"], ["bars", "Наличие данных"], ["bolt", "Профиль мощности"],
  ["quality", "Качество электроэнергии"], ["base", "База настроек устройства"], ["events", "Архив событий устройства"],
  ["warn", "Нештатные ситуации"], ["hardhat", "Работы на объекте"], ["", "Сравнение потребления"], ["", "История оборудования", true],
  ["temp", "Температурный график"], ["pie", "Сводка по жилому дому", true], ["report", "Отчеты"], ["mnemo", "Мнемосхемы", true],
];
const actionItems: [string, string][] = [
  ["play", "Ручной опрос"], ["", "Опросить неопрошенные"], ["monitor", "Мониторинг текущих"], ["sessions", "Сеансы опроса"], ["exportI", "Экспорт данных"],
];
const rowStyle: Record<string, { bg: string; dot: string }> = {
  r: { bg: "#ff9c9c", dot: "#e8212a" },
  y: { bg: "#fff27c", dot: "#f58a1f" },
  w: { bg: "#ffffff", dot: "#1f9d3f" },
  g: { bg: "#cfcfcf", dot: "#a2a2a2" },
};
const rows: { k: string; name: string; addr: string; num: string; blue?: boolean; house?: boolean }[] = [
  { k: "r", name: "Котельная ул. Калинина, 13", addr: "г. Краснодар, ул. Калинина, 13", num: "312", blue: true },
  { k: "y", name: "Котельная пр. Чекистов, 8", addr: "г. Краснодар, пр. Чекистов, 8", num: "374", blue: true },
  { k: "r", name: "Котельная ул. Красная, 176", addr: "г. Краснодар, ул. Красная, 176", num: "255", blue: true },
  { k: "r", name: "Котельная пер. Угольный, 3", addr: "г. Краснодар, пер. Угольный, 3", num: "377", blue: true },
  { k: "y", name: "Котельная ул. Гагарина, 65", addr: "г. Краснодар, ул. Гагарина, 65", num: "108 136", blue: true },
  { k: "y", name: "Котельная пос. Индустриальный", addr: "г. Краснодар, пос. Индустриальный", num: "272", blue: true },
  { k: "y", name: "Котельная ст. Елизаветинская", addr: "г. Краснодар, ст. Елизаветинская", num: "245", blue: true },
  { k: "r", name: "Котельная п. Белозерный, 18", addr: "г. Краснодар, п. Белозерный, 18", num: "220", blue: true },
  { k: "y", name: "Котельная ул. Ленина, 5", addr: "г. Краснодар, ул. Ленина, 5", num: "352", blue: true },
  { k: "w", name: "Котельная ул. Мира, 44", addr: "г. Краснодар, ул. Мира, 44", num: "296", blue: true },
  { k: "y", name: "Котельная ул. Садовая, 9", addr: "г. Краснодар, ул. Садовая, 9", num: "308 100...", blue: true },
  { k: "w", name: "Котельная пос. Российский", addr: "г. Краснодар, пос. Российский", num: "259", blue: true },
  { k: "y", name: "Котельная ул. Северная, 2", addr: "г. Краснодар, ул. Северная, 2", num: "378", blue: true },
  { k: "y", name: "Котельная ст. Старокорсунская", addr: "г. Краснодар, ст. Старокорсунская", num: "244", blue: true },
  { k: "y", name: "ЦТП ул. Уральская, 75", addr: "г. Краснодар, ул. Уральская, 75", num: "476" },
  { k: "g", name: "ПНС ТК-28  ул. Ставропольская", addr: "г. Краснодар, ул. Ставропольская", num: "165", house: true },
  { k: "g", name: "Котельная ул. Зиповская, 5", addr: "г. Краснодар, ул. Зиповская, 5", num: "260" },
  { k: "y", name: "Котельная ул. Уральская, 99, строение 5", addr: "г. Краснодар, ул. Уральская, 99, строение 5", num: "310" },
  { k: "r", name: "Котельная ул. им. Пушкина, 51", addr: "г. Краснодар, ул. им. Пушкина, 51", num: "290" },
  { k: "g", name: "Котельная ул. Новороссийская, 202/2", addr: "г. Краснодар, ул. Новороссийская, 202/2", num: "349" },
];
const subRows: [string, string, string, string, string?][] = [
  ["flameW", "#1f9d3f", "Газоснабжение", "ЕС", "#cfcfcf"],
  ["thermo", "#e8212a", "Теплоснабжение", "Ша"],
  ["tap", "#1f9d3f", "ХВС", "Ша"],
];
type Nav = { g?: boolean; chev?: boolean; i?: string; t: string; h: number; sel?: boolean; fx?: boolean };
const nav: Nav[] = [
  { g: true, t: "Общие", h: 28 },
  { i: "point", t: "Точка учета", h: 29, sel: true },
  { i: "sensor", t: "Датчики", h: 28 },
  { i: "warn", t: "Диагностика", h: 28 },
  { i: "params", t: "Отображаемые\nпараметры", h: 40 },
  { i: "unit", t: "Отображаемые\nединицы\nизмерения", h: 55 },
  { i: "copy", t: "Копирование\nданных", h: 35 },
  { i: "report", t: "Отчеты", h: 30 },
  { i: "attr", t: "Атрибуты", h: 28 },
  { g: true, t: "Расчёт", h: 28 },
  { i: "calc", t: "Расчет и хранение", h: 29 },
  { fx: true, t: "Расчётные\nформулы", h: 40 },
  { g: true, t: "Опрос", h: 27 },
  { i: "device", t: "Устройство", h: 28 },
  { i: "globe", t: "Подключения", h: 30 },
  { i: "alarm", t: "Автоопрос", h: 28, chev: true },
  { g: true, t: "Энергоснабжающая\nорганизация", h: 38 },
  { i: "contract", t: "Договор", h: 28 },
];

const Grid = () => (
  <GridBox>
    <GridTop>
      <GridMain>
        <HeadRow>
          <HeadCell /><HeadCell /><HeadCell /><HeadCell /><HeadCell />
          <HeadCell>Наименование</HeadCell>
          <HeadCell>Адрес</HeadCell>
          <HeadCell $end $pad={13}><Arrow $up $c="#666" /></HeadCell>
          <HeadCell>Дата допуска</HeadCell>
          <HeadCell>Поквартирный опрос</HeadCell>
          <HeadCell>Номер</HeadCell>
          <HeadCell>Потребитель</HeadCell>
        </HeadRow>
        <FilterRow>
          <BaseCell><Funnel /></BaseCell>
          <BaseCell $span={2}><FilterMark /></BaseCell>
          <BaseCell /><BaseCell /><BaseCell /><BaseCell /><BaseCell /><BaseCell /><BaseCell /><BaseCell /><BaseCell />
        </FilterRow>
        <RowLine>
          <BaseCell><TriRight /></BaseCell>
          <BaseCell><Expander /></BaseCell>
          <BaseCell><CheckBox /></BaseCell>
          <BaseCell><Dot $c="#e8212a" /></BaseCell>
          <BaseCell><Svg n="boiler" s={23} /></BaseCell>
          <TextCell>Котельная ул. им. 40-летия Победы, 10/1</TextCell>
          <TextCell>г. Краснодар, ул. им. 40-летия Победы, 10/1</TextCell>
          <ProgressCell $bg="#ff9c9c">10.12.2023 20:32:12</ProgressCell>
          <BaseCell /><BaseCell />
          <TextCell $num>247</TextCell>
          <TextCell>ООО "Краснодартеплоэнерго"</TextCell>
        </RowLine>
        <SubPanel>
          <SubInner>
            <SubHead>
              <HeadCell><Svg n="focus" s={14} /></HeadCell>
              <HeadCell /><HeadCell />
              <HeadCell $end $pad={24}>Номер договора с РСО</HeadCell>
              <HeadCell>Дата допуска</HeadCell>
              <HeadCell>Потребитель</HeadCell>
              <HeadCell>Комментарий</HeadCell>
            </SubHead>
            {subRows.map(([ic, c, t, com, bg]) => (
              <SubRow key={t} $bg={bg}>
                <BaseCell $white>{bg ? <TriRight /> : null}</BaseCell>
                <BaseCell><Svg n={ic} s={22} /></BaseCell>
                <BaseCell><Dot $c={c} /></BaseCell>
                <TextCell>{t}</TextCell>
                <BaseCell />
                <TextCell>ООО "Краснодартеплоэнерго"</TextCell>
                <TextCell>{com}</TextCell>
              </SubRow>
            ))}
            <SubScroll>
              <ScrollBtn><TriLeft /></ScrollBtn>
              <ScrollThumb $w={1105} />
              <Push />
              <ScrollBtn><TriRight /></ScrollBtn>
            </SubScroll>
          </SubInner>
        </SubPanel>
        {rows.map((r, i) => (
          <RowLine key={i} $bg={rowStyle[r.k].bg}>
            <BaseCell />
            <BaseCell><ExpanderPlus /></BaseCell>
            <BaseCell><CheckBox /></BaseCell>
            <BaseCell><Dot $c={rowStyle[r.k].dot} /></BaseCell>
            <BaseCell><Svg n={r.house ? "house" : "boiler"} s={23} /></BaseCell>
            <TextCell>{r.name}</TextCell>
            <TextCell>{r.addr}</TextCell>
            <ProgressCell $blue={r.blue} />
            <BaseCell /><BaseCell />
            <TextCell $num>{r.num}</TextCell>
            <TextCell>ООО "Краснодартеплоэнерго"</TextCell>
          </RowLine>
        ))}
        <RowLine $bg="#fff27c" />
      </GridMain>
      <VScroll>
        <ScrollBtn><Arrow $up /></ScrollBtn>
        <VThumb />
        <ScrollBtn><Arrow /></ScrollBtn>
      </VScroll>
    </GridTop>
    <HScroll>
      <ScrollBtn><TriLeft /></ScrollBtn>
      <ScrollThumb $w={445} />
      <Push />
      <ScrollBtn><TriRight /></ScrollBtn>
    </HScroll>
  </GridBox>
);

const Dialog = () => (
  <Modal>
    <MTitle>
      <Svg n="house" s={20} />
      Редактирование точки учета
      <MClose>✕</MClose>
    </MTitle>
    <MHead>
      <MHeadTitle>Точка учета</MHeadTitle>
      <MHeadSub>Основные свойства точки учета</MHeadSub>
      <MPath><a>Котельная ул. им. 40-летия Победы, 10/1</a> - Газоснабжение</MPath>
    </MHead>
    <MBody>
      <NavTree>
        {nav.map((n) =>
          n.g ? (
            <NavGroup key={n.t} $h={n.h}><NavChev $open /><NavGroupText>{n.t}</NavGroupText></NavGroup>
          ) : (
            <NavItem key={n.t} $h={n.h} $sel={n.sel}>
              <NavChevSlot>{n.chev ? <NavChev /> : null}</NavChevSlot>
              {n.fx ? <FxLabel>f(x)</FxLabel> : <Svg n={n.i!} s={20} />}
              <span>{n.t}</span>
            </NavItem>
          )
        )}
      </NavTree>
      <MContent>
        <Group>
          <GroupHead>Общие</GroupHead>
          <FormBody>
            <FormRow><FLabel $bold>Наименование:</FLabel><Input>Газоснабжение</Input></FormRow>
            <FormRow><FLabel $bold>Система:</FLabel><Input $w={165} $off><Svg n="flame" s={18} />Газоснабжение<InputEnd><Arrow $c="#bbb" /></InputEnd></Input></FormRow>
            <FormRow><FLabel>Номер:</FLabel><Input $w={165}>51351</Input></FormRow>
            <FormRow><FLabel>Допуск в эспл.:</FLabel><Input $w={165}><InputEnd><Arrow /><RedX>✕</RedX></InputEnd></Input></FormRow>
            <FormRow $mt={3}><FLabel>Комментарий:</FLabel><Input>ЕСТЬ в АСКУГ. СЗ от Бурдака Д.В. На реконструкции. Установлен EL-3100.</Input></FormRow>
            <FormRow><FLabel $off>Потребитель:</FLabel><Input $off><InputEnd><Arrow $c="#bbb" /><GreyMark>✕</GreyMark><GreyMark>✚</GreyMark></InputEnd></Input></FormRow>
            <FormRow><FLabel $ls={-0.3}>Режим обслуживания:</FLabel><Input $w={165}>Рабочий<InputEnd><Arrow /></InputEnd></Input></FormRow>
            <FormRow><FLabel>Расчетный час:</FLabel><Input $w={88} $right>10:00<SpinBox><Arrow $up /><Arrow /></SpinBox></Input><UnitLabel $ml={7}>чч</UnitLabel><DropButton>Дополнительно<Arrow /></DropButton></FormRow>
            <FormRow><FLabel>Расчетный день:</FLabel><Input $w={88} $right>1<SpinBox><Arrow $up /><Arrow /></SpinBox></Input><UnitLabel $ml={12}>й день</UnitLabel></FormRow>
            <CheckRow $inset={0} $mt={-3}><Check $off /><OffText>Расчетная точка учета</OffText></CheckRow>
          </FormBody>
        </Group>
        <Group>
          <GroupHead>Просмотр данных</GroupHead>
          <CheckRow>
            <Check>✓</Check>Отображать рассчитанные данные
            <Check $ml={76}>✓</Check>Отображать недостоверные значения
          </CheckRow>
        </Group>
      </MContent>
    </MBody>
    <MFoot>
      <MButton $off>&lt; Назад</MButton>
      <MButton $focus>Далее &gt;</MButton>
      <MButton $gap={134}>ОК</MButton>
      <MButton>Отменить</MButton>
    </MFoot>
  </Modal>
);

export default function App() {
  return (
    <Screen>
      <Global />
      <TitleBar>
        <LogoBox><LogoCircle><LersLogo s={40} /></LogoCircle></LogoBox>
        <TitleRows>
          <MenuRow>
            {menuTop.map((m) => <MenuItem key={m.t} $mr={m.mr} $ls={m.ls}>{m.t}<Chev /></MenuItem>)}
            <MenuItem $mr={11}><Svg n="palette" s={22} />Оформление<Chev /></MenuItem>
            <MenuItem $mr={11}><Svg n="xls" s={20} /></MenuItem>
            <MenuItem $mr={9}><Svg n="saveIco" s={20} /></MenuItem>
            <MenuItem $mr={20}><Svg n="printIco" s={20} /></MenuItem>
            <MenuItem $mr={0}><Caret /></MenuItem>
            <TitleText>Объекты учета <span>- ЛЭРС УЧЕТ 3.54.3 ЛЭРС домен</span></TitleText>
            <WinButtons><span>—</span><span>❐</span><span>✕</span></WinButtons>
          </MenuRow>
          <TabsRow>
            <TopTab $w={100}>Навигация</TopTab>
            <TopTab $w={93} $active>Действия</TopTab>
            <TopSearch>⌕ Поиск</TopSearch>
            <RightInfo>
              <ChevUp />
              <Svg n="user" s={18} h={24} />
              <MenuItem $mr={13}>&nbsp;<UserName>Андрианов Александр Васильевич</UserName><Chev /></MenuItem>
              <Svg n="listI" s={18} />
              <NoticeLabel>Уведомления</NoticeLabel>
              <Badge>10368</Badge>
            </RightInfo>
          </TabsRow>
        </TitleRows>
      </TitleBar>

      <Ribbon>
        <RGroup $w={391}>
          <RBody>
            <RSpacer $w={3} />
            <RButton $w={100} $off><Svg n="houseAdd" s={40} h={42} />{"Создать\nобъект учёта"}</RButton>
            <RButton $w={72} $off><Svg n="buildAdd" s={40} h={42} />{"Создать\nжилой дом"}</RButton>
            <RButton $w={75} $off><Svg n="srcAdd" s={40} h={42} />{"Создать\nисточник"}</RButton>
            <RButton $w={66}><Svg n="props" s={42} />Свойства</RButton>
            <RButton $w={70}><Svg n="del" s={36} h={42} />Удалить</RButton>
          </RBody>
          <RLabel>Редактирование</RLabel>
        </RGroup>
        <RGroup $w={397}>
          <RBody>
            <RButton $w={78}><Svg n="funnel" s={40} h={42} />{"Очистить\nфильтр"}</RButton>
            <RButton $w={66}><Svg n="refresh" s={40} h={42} />Обновить</RButton>
            <RSpacer $w={8} />
            <RFieldLabel $w={47}>Поиск:</RFieldLabel>
            <RField $w={185}>⌕<RedX>✕</RedX></RField>
          </RBody>
          <RLabel />
        </RGroup>
        <RGroup $w={261}>
          <RBody>
            <RSpacer $w={10} />
            <RFieldLabel $w={52}>Группы:</RFieldLabel>
            <RField $w={182}><Arrow /><RedX>✕</RedX></RField>
          </RBody>
          <RLabel />
        </RGroup>
        <RGroup $w={246}>
          <RBody>
            <RButton $w={77}><Svg n="params" s={40} h={42} /></RButton>
            <RButton $w={82}><Svg n="undo" s={40} h={42} /></RButton>
            <RButton $w={84}><Svg n="tree" s={36} h={42} /></RButton>
          </RBody>
          <RLabel />
        </RGroup>
        <RGroup $w={227}>
          <RBody>
            <RSpacer $w={10} />
            <RField $w={205}>
              <GreyMark>✕</GreyMark>
              <InputEnd $mr={30}>[Фильтр не выбран]</InputEnd>
              <Arrow />
            </RField>
          </RBody>
          <RLabel>Фильтр</RLabel>
        </RGroup>
      </Ribbon>

      <DocTabs>
        <DocTab $w={144} $active>Объекты учета<span>✕</span></DocTab>
        <DocTab $w={110}>Список записей</DocTab>
        <DocTab $w={109}>Сеансы опроса</DocTab>
        <DocTab $w={98}>Ручной опрос</DocTab>
        <DocClose>✕</DocClose>
      </DocTabs>

      <Main>
        <SidePanel>
          <SideHead>Действия<Svg n="pin" s={14} /></SideHead>
          <SideBody>
            <SideArrow $h={12}><Arrow $up $c="#aaa" /></SideArrow>
            <SideTitle>Просмотр данных<ChevTitle /></SideTitle>
            <SideList>
              {viewItems.map(([ic, t, off]) => (
                <SideItem key={t} $off={off}><IconSlot>{ic && <Svg n={ic} s={22} />}</IconSlot>{t}</SideItem>
              ))}
            </SideList>
            <SideTitle>Действия<ChevTitle /></SideTitle>
            <SideList>
              {actionItems.map(([ic, t]) => (
                <SideItem key={t}><IconSlot>{ic && <Svg n={ic} s={22} />}</IconSlot>{t}</SideItem>
              ))}
            </SideList>
          </SideBody>
        </SidePanel>
        <Grid />
      </Main>

      <StatusBar>
        <StatusCell $w={109} $kind="first">Записей: 721</StatusCell>
        <StatusCell>Котельная ул. им. 40-летия Победы, 10/1 - Газоснабжение</StatusCell>
        <Push />
        <StatusCell><Svg n="lamp" s={22} />Служб опроса: 3; портов: 23, действует: 20, свободно: 7</StatusCell>
        <StatusCell $kind="last">http://lers.krteplo.ru:10000/ | 21:43 (10 дек)</StatusCell>
      </StatusBar>

      <Taskbar>
        {taskArt.map((t, i) => <TaskIcon key={i} $active={t.a}>{t.e}</TaskIcon>)}
        <Tray>
          <TrayItem $mr={11}>
            <svg width="16" height="16" viewBox="0 0 16 16"><path d="M2 11l6-6 6 6" stroke="#eee" fill="none" /></svg>
          </TrayItem>
          <TrayItem $mr={14}>
            <svg width="20" height="18" viewBox="0 0 20 18"><path d="M2 6h3l4-4v14l-4-4H2zM13 6l5 6M18 6l-5 6" stroke="#eee" fill="none" /></svg>
          </TrayItem>
          <TrayItem $mr={9}>
            <svg width="20" height="18" viewBox="0 0 20 18"><path d="M2 16A14 14 0 0 1 16 2M6 16A10 10 0 0 1 16 6M10 16a6 6 0 0 1 6-6" stroke="#ddd" fill="none" /><circle cx="15" cy="15" r="2" fill="#ddd" /></svg>
          </TrayItem>
          <TrayItem $mr={14}>
            <svg width="20" height="14" viewBox="0 0 20 14"><rect x="3" y="2" width="16" height="11" fill="#eee" /><rect x="0" y="0" width="4" height="5" fill="#eee" /></svg>
          </TrayItem>
          РУС
          <Clock>22:02<br />10.12.2023</Clock>
          <svg width="26" height="32" viewBox="0 0 26 32"><rect x="2" y="2" width="20" height="22" fill="#eee" /><path d="M5 8h14M5 12h14M5 16h14" stroke="#333" strokeWidth="1.5" /><circle cx="18" cy="23" r="8" fill="#222" stroke="#bbb" /><text x="18" y="27" fontSize="11" fontWeight="bold" fill="#fff" textAnchor="middle" fontFamily="Liberation Sans">5</text></svg>
        </Tray>
      </Taskbar>

      <Dialog />
      <Highlight />
    </Screen>
  );
}
